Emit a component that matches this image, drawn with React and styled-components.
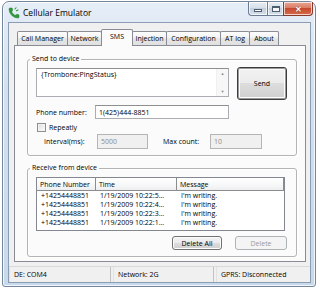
import React from "react";
import styled, { createGlobalStyle, css } from "styled-components";

const GlobalStyle = createGlobalStyle`
  body {
    margin: 0;
    background: #fff;
    font-family: "Open Sans", "Noto Sans", sans-serif;
    font-size: 7px;
    color: #000;
  }
  * { box-sizing: border-box; }
`;

const tabs = [
  { label: "Call Manager", w: 51 },
  { label: "Network", w: 35 },
  { label: "SMS", w: 32, active: true },
  { label: "Injection", w: 35 },
  { label: "Configuration", w: 55 },
  { label: "AT log", w: 30 },
  { label: "About", w: 30 },
];

const messages = [
  { phone: "+14254448851", time: "1/19/2009 10:22:5...", text: "I'm writing." },
  { phone: "+14254448851", time: "1/19/2009 10:22:4...", text: "I'm writing." },
  { phone: "+14254448851", time: "1/19/2009 10:22:3...", text: "I'm writing." },
  { phone: "+14254448851", time: "1/19/2009 10:22:1...", text: "I'm writing." },
];

const columns = [
  { label: "Phone Number", w: 59 },
  { label: "Time", w: 81 },
  { label: "Message", w: 107 },
];

const App = () => {
  return (
    <>
      <GlobalStyle />
      <Window>
        <TitleBar>
          <AppIcon viewBox="0 0 24 24">
            <path
              d="M13.8 16.6a1 1 0 0 0 1.2-.3l.4-.5A2 2 0 0 1 17 15h3a2 2 0 0 1 2 2v3a2 2 0 0 1-2 2A18 18 0 0 1 2 4a2 2 0 0 1 2-2h3a2 2 0 0 1 2 2v3a2 2 0 0 1-.8 1.6l-.5.4a1 1 0 0 0-.3 1.2 14 14 0 0 0 6.4 6.4z"
              fill="#2f9a3a"
              stroke="#1f7a2a"
              strokeWidth="1"
            />
            <path d="M14 4l2-2.5M17 7.5l3-1.5" stroke="#2f9a3a" strokeWidth="2.2" strokeLinecap="round" />
          </AppIcon>
          <Title>Cellular Emulator</Title>
          <Controls>
            <CtrlButton $kind="min">
              <MinGlyph />
            </CtrlButton>
            <CtrlButton $kind="max">
              <MaxGlyph />
            </CtrlButton>
            <CtrlButton $kind="close">✕</CtrlButton>
          </Controls>
        </TitleBar>

        <Client>
          <TabStrip>
            {tabs.map((t) => (
              <Tab key={t.label} $w={t.w} $active={t.active}>
                {t.label}
              </Tab>
            ))}
          </TabStrip>

          <TabPanel>
            <Group $top={8}>
              <Legend>Send to device</Legend>
              <Row $h={33}>
                <Memo>
                  <MemoText>{"{Trombone:PingStatus}"}</MemoText>
                  <ScrollBar>
                    <ScrollArrow>▲</ScrollArrow>
                    <ScrollArrow>▼</ScrollArrow>
                  </ScrollBar>
                </Memo>
                <PushButton $w={50} $h={33} $default>
                  Send
                </PushButton>
              </Row>
              <Row $h={14} $mt={5}>
                <Label $w={59}>Phone number:</Label>
                <TextBox $w={134}>1(425)444-8851</TextBox>
              </Row>
              <Row $h={9} $mt={4} $pl={1}>
                <CheckBox />
                <Label>Repeatly</Label>
              </Row>
              <Row $h={15} $mt={2} $pl={8}>
                <Label $w={53}>Interval(ms):</Label>
                <TextBox $w={51} $disabled>
                  5000
                </TextBox>
                <Label $w={47} $ml={15}>
                  Max count:
                </Label>
                <TextBox $w={52} $disabled>
                  10
                </TextBox>
              </Row>
            </Group>

            <Group $top={7} $padTop={4}>
              <Legend>Receive from device</Legend>
              <ListView>
                <ListHeader>
                  {columns.map((c) => (
                    <HeaderCell key={c.label} $w={c.w}>
                      {c.label}
                    </HeaderCell>
                  ))}
                </ListHeader>
                {messages.map((m, i) => (
                  <ListRow key={i}>
                    <Cell $w={columns[0].w}>{m.phone}</Cell>
                    <Cell $w={columns[1].w}>{m.time}</Cell>
                    <Cell $w={columns[2].w}>{m.text}</Cell>
                  </ListRow>
                ))}
              </ListView>
              <ButtonRow>
                <PushButton $w={50} $h={14}>
                  Delete All
                </PushButton>
                <PushButton $w={52} $h={14} $disabled>
                  Delete
                </PushButton>
              </ButtonRow>
            </Group>
          </TabPanel>

          <StatusBar>
            <StatusPanel $w={102}>DE: COM4</StatusPanel>
            <StatusPanel $w={101}>Network: 2G</StatusPanel>
            <StatusPanel $last>GPRS: Disconnected</StatusPanel>
          </StatusBar>
        </Client>
      </Window>
    </>
  );
};

const Window = styled.div`
  margin: 1px 0 0 2px;
  width: 314px;
  height: 286px;
  border: 1px solid #74869b;
  border-radius: 7px 7px 3px 3px;
  background: linear-gradient(180deg, #e6eef7 0%, #d3e1ef 30%, #c8d9eb 100%);
  box-shadow: inset 0 0 0 1px rgba(255, 255, 255, 0.75);
  display: flex;
  flex-direction: column;
  padding: 0 4px 3px 5px;
`;

const TitleBar = styled.div`
  height: 20px;
  display: flex;
  align-items: center;
`;

const AppIcon = styled.svg`
  width: 12px;
  height: 12px;
  flex: none;
  margin-top: 1px;
`;

const Title = styled.span`
  margin-left: 3px;
  font-size: 8.5px;
  color: #000;
`;

const Controls = styled.div`
  margin-left: auto;
  margin-right: -2px;
  align-self: flex-start;
  display: flex;
`;

const CtrlButton = styled.div`
  height: 14px;
  display: flex;
  align-items: center;
  justify-content: center;
  border: 1px solid #6b7d93;
  border-top: none;
  box-shadow: inset 0 0 0 1px rgba(255, 255, 255, 0.7);
  ${({ $kind }) =>
    $kind === "min" &&
    css`
      width: 19px;
      border-radius: 0 0 0 4px;
      border-right: none;
      background: linear-gradient(#e9eef4, #d5dde7 50%, #c4cfdc 50%, #d6e0ea);
    `}
  ${({ $kind }) =>
    $kind === "max" &&
    css`
      width: 16px;
      border-right: none;
      background: linear-gradient(#e9eef4, #d5dde7 50%, #c4cfdc 50%, #d6e0ea);
    `}
  ${({ $kind }) =>
    $kind === "close" &&
    css`
      width: 30px;
      border-color: #8a3a2c;
      border-radius: 0 0 4px 0;
      background: linear-gradient(#e9a897, #d9765f 50%, #c74a2f 50%, #d66a4c);
      color: #fff;
      font-size: 8px;
      font-weight: bold;
      text-shadow: 0 0 1px #5a1a10;
    `}
`;

const MinGlyph = styled.span`
  width: 8px;
  height: 3px;
  margin-top: 3px;
  background: #fff;
  border: 1px solid #4d5d70;
`;

const MaxGlyph = styled.span`
  width: 8px;
  height: 6px;
  border: 1px solid #4d5d70;
  border-top-width: 2px;
  background: #f4f6f9;
`;

const Client = styled.div`
  flex: 1;
  border: 1px solid #8a9db3;
  background: #f0f0f0;
  display: flex;
  flex-direction: column;
  padding: 6px 4px 0 5px;
`;

const TabStrip = styled.div`
  height: 16px;
  display: flex;
  align-items: flex-end;
  padding-left: 3px;
`;

const Tab = styled.div`
  width: ${({ $w }) => $w}px;
  height: 14px;
  margin-right: -1px;
  border: 1px solid #898c95;
  border-bottom: none;
  border-radius: 2px 2px 0 0;
  background: linear-gradient(#fdfdfd, #f1f1f1 50%, #e6e6e6 50%, #e0e0e0);
  display: flex;
  align-items: center;
  justify-content: center;
  white-space: nowrap;
  ${({ $active }) =>
    $active &&
    css`
      position: relative;
      z-index: 1;
      height: 17px;
      margin-bottom: -1px;
      background: #fbfbfb;
      padding-bottom: 4px;
    `}
`;

const TabPanel = styled.div`
  height: 217px;
  border: 1px solid #898c95;
  background: #fbfbfb;
  display: flex;
  flex-direction: column;
`;

const Group = styled.fieldset`
  margin: ${({ $top }) => $top}px 8px 0 12px;
  padding: ${({ $padTop }) => $padTop ?? 3}px 8px 6px 8px;
  border: 1px solid #b4b4b4;
  border-radius: 3px;
  box-shadow: inset 1px 1px 0 #fff, 1px 1px 0 #fff;
  min-width: 0;
`;

const Legend = styled.legend`
  margin-left: -6px;
  padding: 0 2px;
  line-height: 10px;
  height: 10px;
`;

const Row = styled.div`
  height: ${({ $h }) => $h}px;
  margin-top: ${({ $mt }) => $mt ?? 0}px;
  padding-left: ${({ $pl }) => $pl ?? 0}px;
  display: flex;
  align-items: center;
  gap: 0;
  ${({ $h }) =>
    $h > 20 &&
    css`
      align-items: flex-start;
      gap: 8px;
    `}
`;

const Memo = styled.div`
  width: 193px;
  height: 29px;
  margin-top: 1px;
  border: 1px solid #abadb3;
  border-top-color: #8e8f8f;
  background: #fff;
  display: flex;
`;

const MemoText = styled.div`
  flex: 1;
  padding: 1px 0 0 4px;
`;

const ScrollBar = styled.div`
  width: 12px;
  display: flex;
  flex-direction: column;
  justify-content: space-between;
  background: #f7f7f7;
  border-left: 1px solid #f0f0f0;
`;

const ScrollArrow = styled.span`
  font-size: 4px;
  line-height: 9px;
  text-align: center;
  color: #8a8a8a;
`;

const PushButton = styled.div`
  width: ${({ $w }) => $w}px;
  height: ${({ $h }) => $h}px;
  border: 1px solid #707070;
  border-radius: 3px;
  background: linear-gradient(#f2f2f2, #ebebeb 50%, #dddddd 50%, #cfcfcf);
  box-shadow: inset 0 0 0 1px #fcfcfc;
  display: flex;
  align-items: center;
  justify-content: center;
  ${({ $default }) =>
    $default &&
    css`
      border-color: #3c3c3c;
      box-shadow: inset 0 0 0 1px #9a9a9a, inset 0 0 0 2px #fbfbfb;
    `}
  ${({ $disabled }) =>
    $disabled &&
    css`
      border-color: #adb2b5;
      background: #f4f4f4;
      box-shadow: none;
      color: #9a9a9a;
    `}
`;

const Label = styled.span`
  width: ${({ $w }) => ($w ? `${$w}px` : "auto")};
  margin-left: ${({ $ml }) => $ml ?? 0}px;
  flex: none;
  white-space: nowrap;
`;

const TextBox = styled.div`
  width: ${({ $w }) => $w}px;
  height: 100%;
  border: 1px solid #abadb3;
  border-top-color: #8e8f8f;
  background: #fff;
  display: flex;
  align-items: center;
  padding-left: 3px;
  ${({ $disabled }) =>
    $disabled &&
    css`
      background: #f0f0f0;
      border-color: #b5b5b5;
      color: #8d8d8d;
    `}
`;

const CheckBox = styled.span`
  width: 9px;
  height: 9px;
  margin-right: 3px;
  border: 1px solid #8e8f8f;
  background: linear-gradient(135deg, #dcdcdc, #fff);
  box-shadow: inset 0 0 0 1px #f4f4f4;
`;

const ListView = styled.div`
  width: 249px;
  height: 54px;
  border: 1px solid #828790;
  background: #fff;
`;

const ListHeader = styled.div`
  height: 13px;
  display: flex;
  border-bottom: 1px solid #8c8c8c;
  background: linear-gradient(#ffffff, #f6f7f8 60%, #eceef0);
`;

const HeaderCell = styled.div`
  width: ${({ $w }) => $w}px;
  border-right: 1px solid #8c8c8c;
  padding-left: 3px;
  display: flex;
  align-items: center;
  white-space: nowrap;
`;

const ListRow = styled.div`
  height: 9px;
  display: flex;
  align-items: center;
`;

const Cell = styled.div`
  width: ${({ $w }) => $w}px;
  padding-left: 4px;
  white-space: nowrap;
  overflow: hidden;
  line-height: 9px;
`;

const ButtonRow = styled.div`
  margin-top: 5px;
  display: flex;
  justify-content: flex-end;
  gap: 13px;
  padding-right: 1px;
`;

const StatusBar = styled.div`
  height: 16px;
  margin: 4px -4px 0 -5px;
  display: flex;
  border-top: 1px solid #d9d9d9;
`;

const StatusPanel = styled.div`
  width: ${({ $w }) => ($w ? `${$w}px` : "auto")};
  flex: ${({ $last }) => ($last ? 1 : "none")};
  margin-right: ${({ $last }) => ($last ? 0 : 2)}px;
  border-right: ${({ $last }) => ($last ? "none" : "1px solid #c2c2c2")};
  border-left: 1px solid #e2e2e2;
  padding-left: 4px;
  display: flex;
  align-items: center;
  white-space: nowrap;
`;

export default App;
